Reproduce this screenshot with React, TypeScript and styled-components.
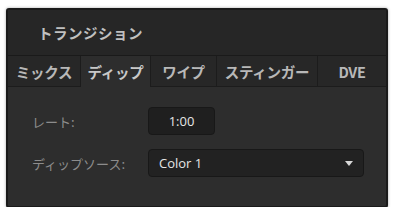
import styled, { createGlobalStyle } from "styled-components";

const GlobalStyle = createGlobalStyle`
  html, body {
    margin: 0;
    padding: 0;
    background: #ffffff;
  }
  body {
    font-family: "Noto Sans CJK JP", "Noto Sans", sans-serif;
  }
`;

const tabs = [
  { label: "ミックス", width: 73 },
  { label: "ディップ", width: 70, active: true },
  { label: "ワイプ", width: 66 },
  { label: "スティンガー", width: 101 },
  { label: "DVE", width: 65 },
];

const App = () => {
  return (
    <>
      <GlobalStyle />
      <Page>
        <Panel>
          <Header>
            <Title>トランジション</Title>
          </Header>
          <TabBar>
            {tabs.map((t) => (
              <Tab key={t.label} $active={t.active} style={{ width: t.width }}>
                {t.label}
              </Tab>
            ))}
          </TabBar>
          <Body>
            <Row>
              <Label>レート:</Label>
              <RateBox>1:00</RateBox>
            </Row>
            <Row>
              <Label>ディップソース:</Label>
              <Select>
                <span>Color 1</span>
                <Arrow viewBox="0 0 10 6">
                  <path d="M0 0 L10 0 L5 6 Z" fill="#d8d8d8" />
                </Arrow>
              </Select>
            </Row>
          </Body>
        </Panel>
      </Page>
    </>
  );
};

const Page = styled.div`
  width: 393px;
  height: 207px;
  padding: 8px 5px 3px 6px;
  box-sizing: border-box;
`;

const Panel = styled.div`
  height: 100%;
  background: #2d2d2d;
  border: 2px solid #1a1a1a;
  border-radius: 3px;
  box-shadow: 0 0 3px rgba(0, 0, 0, 0.35);
  display: flex;
  flex-direction: column;
  overflow: hidden;
`;

const Header = styled.div`
  height: 45px;
  background: #262626;
  border-bottom: 1px solid #1a1a1a;
  display: flex;
  align-items: center;
  padding-left: 30px;
`;

const Title = styled.span`
  color: #c0c0c0;
  font-size: 14.5px;
  font-weight: bold;
  letter-spacing: 0.5px;
`;

const TabBar = styled.div`
  display: flex;
  height: 31px;
  background: #262626;
`;

const Tab = styled.div<{ $active?: boolean }>`
  display: flex;
  align-items: center;
  justify-content: center;
  box-sizing: border-box;
  color: ${(p) => (p.$active ? "#c8c8c8" : "#b8b8b8")};
  font-size: 14.5px;
  font-weight: bold;
  letter-spacing: -0.3px;
  background: ${(p) => (p.$active ? "#2d2d2d" : "#272727")};
  border-right: 1px solid #1c1c1c;
  border-bottom: ${(p) => (p.$active ? "none" : "1px solid #1c1c1c")};
  white-space: nowrap;
  &:last-child {
    flex: 1;
    border-right: none;
  }
`;

const Body = styled.div`
  flex: 1;
  display: flex;
  flex-direction: column;
  gap: 14px;
  padding: 20px 0 0 24px;
`;

const Row = styled.div`
  display: flex;
  align-items: center;
  height: 28px;
`;

const Label = styled.span`
  width: 116px;
  color: #8c8c8c;
  font-size: 13px;
  white-space: nowrap;
`;

const RateBox = styled.div`
  width: 67px;
  height: 28px;
  box-sizing: border-box;
  background: #1f1f1f;
  border: 1px solid #181818;
  border-radius: 4px;
  color: #e6e6e6;
  font-family: "Open Sans", "Noto Sans", sans-serif;
  font-size: 13px;
  display: flex;
  align-items: center;
  justify-content: center;
`;

const Select = styled.div`
  width: 216px;
  height: 28px;
  box-sizing: border-box;
  background: #222222;
  border: 1px solid #181818;
  border-radius: 4px;
  color: #e6e6e6;
  font-family: "Open Sans", "Noto Sans", sans-serif;
  font-size: 13px;
  display: flex;
  align-items: center;
  justify-content: space-between;
  padding: 0 10px 0 10px;
`;

const Arrow = styled.svg`
  width: 8px;
  height: 5px;
`;

export default App;
